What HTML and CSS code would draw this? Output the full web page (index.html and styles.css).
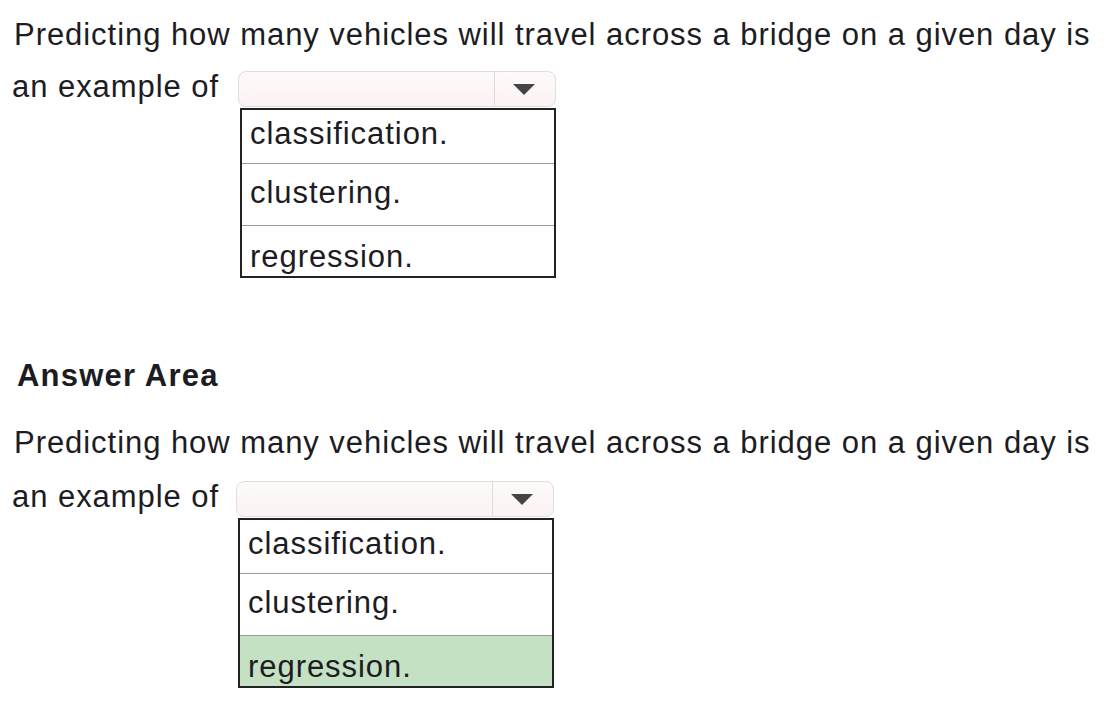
FILE: index.html
```html
<!DOCTYPE html>
<html lang="en">

<head>
    <meta charset="UTF-8">
    <title>Answer Area</title>
    <link rel="stylesheet" href="styles.css">
</head>

<body>

    <div class="question">
        <p class="prompt">Predicting how many vehicles will travel across a bridge on a given day is</p>
        <div class="answer-line">
            <span class="lead">an example of</span>
            <div class="select-wrap">
                <div class="select-box">
                    <span class="select-value"></span>
                    <span class="select-arrow"></span>
                </div>
                <ul class="options">
                    <li class="opt-1">classification.</li>
                    <li class="opt-2">clustering.</li>
                    <li class="opt-3">regression.</li>
                </ul>
            </div>
        </div>
    </div>

    <div class="question answer">
        <h2 class="area-title">Answer Area</h2>
        <p class="prompt">Predicting how many vehicles will travel across a bridge on a given day is</p>
        <div class="answer-line">
            <span class="lead">an example of</span>
            <div class="select-wrap">
                <div class="select-box">
                    <span class="select-value"></span>
                    <span class="select-arrow"></span>
                </div>
                <ul class="options">
                    <li class="opt-1">classification.</li>
                    <li class="opt-2">clustering.</li>
                    <li class="opt-3 selected">regression.</li>
                </ul>
            </div>
        </div>
    </div>

</body>

</html>
```

FILE: styles.css
```css
body {
    margin: 0;
    font-family: 'Liberation Sans', Arial, sans-serif;
    color: #1c1c22;
    background-color: #fff;
}

.question {
    padding: 17px 0 0 14px;
}

.prompt {
    margin: 0;
    font-size: 31px;
    line-height: 36px;
    letter-spacing: 0.95px;
    white-space: nowrap;
}

.answer-line {
    display: flex;
    align-items: flex-start;
    margin-top: 16px;
}

.lead {
    font-size: 31px;
    line-height: 36px;
    letter-spacing: 0.95px;
    width: 226px;
    margin-left: -2px;
}

.select-box {
    width: 316px;
    height: 34px;
    margin-top: 2px;
    border: 1px solid #e2dcdc;
    border-radius: 8px;
    background: linear-gradient(#fdfafa, #fbf2f3);
    display: flex;
}

.select-value {
    flex: 1;
}

.select-arrow {
    width: 60px;
    border-left: 1px solid #dcdcdc;
    position: relative;
}

.select-arrow::after {
    content: "";
    position: absolute;
    left: 18px;
    top: 12px;
    border-left: 11px solid transparent;
    border-right: 11px solid transparent;
    border-top: 11px solid #444;
}

.options {
    list-style: none;
    margin: 1px 0 0 2px;
    padding: 0;
    width: 312px;
    border: 2px solid #222;
    font-size: 31px;
    line-height: 30px;
    letter-spacing: 0.95px;
}

.options li {
    padding: 0 0 0 8px;
    border-top: 1px solid #9a9a9a;
    box-sizing: border-box;
}

.options li.opt-1 {
    border-top: none;
    height: 53px;
    padding-top: 9px;
}

.options li.opt-2 {
    height: 62px;
    padding-top: 14px;
}

.options li.opt-3 {
    height: 51px;
    padding-top: 16px;
}

.options li.selected {
    background-color: #c5e1c3;
}

.answer {
    padding-top: 80px;
}

.answer .select-wrap {
    margin-left: -2px;
}

.area-title {
    margin: 0 0 31px 3px;
    font-size: 31px;
    line-height: 36px;
    letter-spacing: 1.2px;
}

.answer .answer-line {
    margin-top: 18px;
}
```
